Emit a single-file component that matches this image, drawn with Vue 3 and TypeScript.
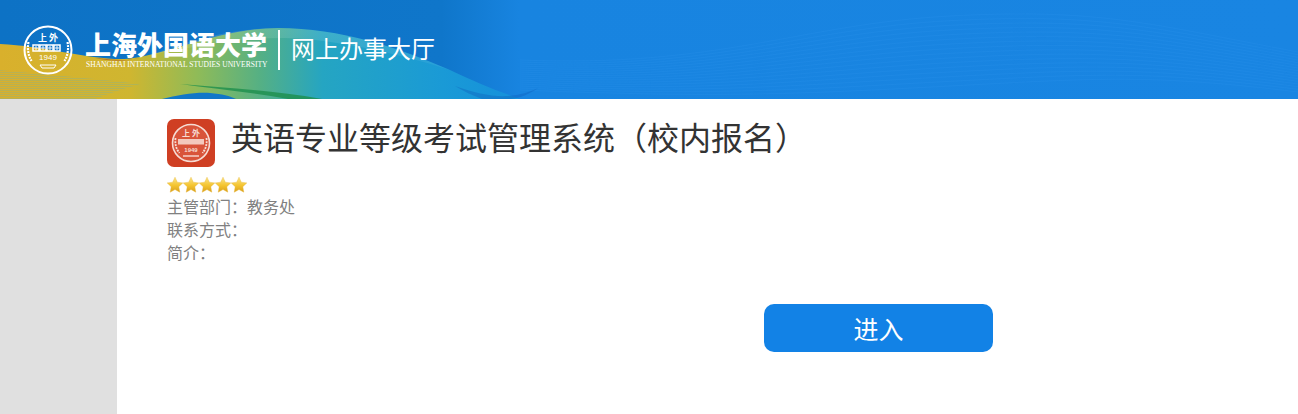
<script setup lang="ts">
const stars = [0, 1, 2, 3, 4];
const starPath = 'M8 .2l2.3 5 5.5.7-4 3.8 1 5.5L8 12.5l-4.8 2.7 1-5.5-4-3.8 5.5-.7z';

// Faint strands of the wave on the right side of the banner
const strands = Array.from({length: 16}, (_, i) => {
  const t = i / 15;
  const a = 90 - t * 30;
  const b = 86 - t * 70;
  const c = 74 - t * 50;
  const d = 92 - t * 40;
  return `M520 ${a}C720 ${a + 8} 800 ${b + 8} 950 ${b}S1150 ${c} 1298 ${d}`;
});
const seals = [13, 20, 27, 34];
</script>

<template>
  <div class="page">
    <header class="banner">
      <svg class="banner-bg" viewBox="0 0 1298 99" preserveAspectRatio="none" aria-hidden="true">
        <defs>
          <linearGradient id="sky" x1="0" x2="1298" y1="0" y2="0" gradientUnits="userSpaceOnUse">
            <stop offset="0" stop-color="#0d72c5" />
            <stop offset="0.34" stop-color="#0f76ca" />
            <stop offset="0.4" stop-color="#1884e0" />
            <stop offset="1" stop-color="#1985e2" />
          </linearGradient>
          <linearGradient id="ribbon" x1="0" x2="520" y1="0" y2="0" gradientUnits="userSpaceOnUse">
            <stop offset="0" stop-color="#d9b02c" />
            <stop offset="0.25" stop-color="#cfb630" />
            <stop offset="0.38" stop-color="#8fbb58" />
            <stop offset="0.5" stop-color="#55b084" />
            <stop offset="0.62" stop-color="#25a5c2" />
            <stop offset="0.85" stop-color="#1a9ad6" />
            <stop offset="1" stop-color="#1590dc" />
          </linearGradient>
          <linearGradient id="fadeTop" x1="0" x2="0" y1="30" y2="99" gradientUnits="userSpaceOnUse">
            <stop offset="0" stop-color="#fff" stop-opacity="0.12" />
            <stop offset="1" stop-color="#fff" stop-opacity="0" />
          </linearGradient>
          <pattern id="hatch" width="8" height="2" patternUnits="userSpaceOnUse">
            <rect width="8" height="1" fill="#6fb0b0" fill-opacity="0.3" />
          </pattern>
        </defs>
        <rect width="1298" height="99" fill="url(#sky)" />
        <path v-for="(d, i) in strands" :key="i" :d="d" fill="none" stroke="#3a9df0" stroke-opacity="0.16" />
        <path d="M0 44C45 46 90 60 125 59C165 56 220 28 278 28C340 28 400 48 450 70C475 82 495 90 520 99H0Z" fill="url(#ribbon)" />
        <path d="M150 55C195 38 240 28 278 28C340 28 400 48 450 70C420 60 340 38 280 38C230 38 190 48 150 55Z" fill="url(#fadeTop)" />
        <path d="M0 70C40 74 90 78 140 84C120 90 105 95 95 99H0Z" fill="url(#hatch)" />
        <path d="M95 58C110 59 125 62 140 58C128 61 112 62 95 58Z" fill="#b8762a" />
        <path d="M180 84C225 88 272 90 322 99H288C250 92 215 89 180 84Z" fill="#1d8f4c" fill-opacity="0.8" />
        <path d="M162 99C178 95 196 92 210 93C222 94 230 96 236 99Z" fill="#1177c8" />
        <path d="M455 86C475 93 492 97 508 96C520 95 530 92 538 88C530 94 520 98 510 99H482C472 95 463 91 455 86Z" fill="#0f58b8" fill-opacity="0.35" />
      </svg>
      <div class="brand">
        <svg class="emblem" viewBox="0 0 50 50" aria-hidden="true">
          <circle cx="25" cy="25" r="23.5" fill="none" stroke="#fff" stroke-width="2" />
          <text x="25" y="15.5" class="emblem-top">上 外</text>
          <g v-for="x in seals" :key="x">
            <rect :x="x - 3" y="20" width="6" height="6" fill="none" stroke="#fff" stroke-width="1.5" />
            <path :d="`M${x - 2} 23h4M${x} 21v4`" stroke="#fff" stroke-width="0.9" />
          </g>
          <text x="25" y="35" class="emblem-year">1949</text>
          <path d="M5.5 17q-2 10 3 19M44.5 17q2 10-3 19" fill="none" stroke="#fff" stroke-width="2.2" stroke-dasharray="2 1" />
          <path d="M17 40h16l-2 3H19z" fill="none" stroke="#fff" stroke-width="1" />
        </svg>
        <div class="school">
          <div class="school-cn">上海外国语大学</div>
          <div class="school-en">SHANGHAI INTERNATIONAL STUDIES UNIVERSITY</div>
        </div>
        <span class="divider"></span>
        <div class="hall">网上办事大厅</div>
      </div>
    </header>
    <div class="body">
      <aside class="side"></aside>
      <main class="main">
        <div class="title-row">
          <svg class="app-icon" viewBox="0 0 48 48" aria-hidden="true">
            <rect width="48" height="48" rx="7" fill="#cf3f23" />
            <circle cx="24" cy="24" r="18.5" fill="#d9543a" stroke="#f6dcd4" stroke-width="1.6" />
            <text x="24" y="16.5" class="icon-top">上 外</text>
            <rect x="11" y="20" width="26" height="5.5" fill="#f3c9bd" />
            <text x="24" y="33" class="icon-year">1949</text>
            <path d="M8.5 19q-1 9 4 15M39.5 19q1 9-4 15" fill="none" stroke="#f6dcd4" stroke-width="1.8" stroke-dasharray="2 1" />
            <path d="M16 37h16" stroke="#f6dcd4" stroke-width="1.4" />
          </svg>
          <h1 class="title">英语专业等级考试管理系统（校内报名）</h1>
        </div>
        <div class="stars">
          <svg v-for="s in stars" :key="s" viewBox="0 0 16 16" class="star" aria-hidden="true">
            <defs>
              <linearGradient :id="`star${s}`" x1="0" x2="0" y1="0" y2="1">
                <stop offset="0" stop-color="#fbe58a" />
                <stop offset="0.55" stop-color="#f4c430" />
                <stop offset="1" stop-color="#d99f1c" />
              </linearGradient>
            </defs>
            <path :d="starPath" :fill="`url(#star${s})`" stroke="#e8b93a" stroke-width="0.4" />
          </svg>
        </div>
        <div class="info">主管部门：教务处</div>
        <div class="info">联系方式：</div>
        <div class="info">简介：</div>
        <div class="actions">
          <button class="enter" type="button">进入</button>
        </div>
      </main>
    </div>
  </div>
</template>

<style scoped>
.page {
  width: 1298px;
  height: 414px;
  overflow: hidden;
  background: #fff;
  font-family: "Noto Sans CJK SC", "Liberation Sans", sans-serif;
}

.banner {
  position: relative;
  height: 99px;
}

.banner-bg {
  position: absolute;
  inset: 0;
  width: 100%;
  height: 100%;
}

.brand {
  position: relative;
  display: flex;
  align-items: center;
  height: 99px;
  padding-left: 23px;
  color: #fff;
}

.emblem {
  width: 50px;
  height: 50px;
  flex: none;
}

.emblem-top,
.emblem-year,
.icon-top,
.icon-year {
  text-anchor: middle;
}

.emblem-top {
  font-size: 9px;
  font-weight: 700;
  fill: #fff;
}

.emblem-year {
  font-family: "Liberation Sans", sans-serif;
  font-size: 8px;
  fill: #fff;
}

.icon-top {
  font-size: 8px;
  font-weight: 700;
  fill: #f6dcd4;
}

.icon-year {
  font-family: "Liberation Sans", sans-serif;
  font-size: 6px;
  font-weight: 700;
  fill: #f6dcd4;
}

.school {
  width: 183px;
  margin-left: 12px;
  margin-top: -1px;
}

.school-cn {
  font-size: 26px;
  line-height: 32px;
  font-weight: 900;
  white-space: nowrap;
}

.school-en {
  font-family: "Liberation Serif", serif;
  font-size: 7.55px;
  line-height: 10px;
  white-space: nowrap;
  padding-left: 1px;
}

.divider {
  width: 2px;
  height: 40px;
  margin-left: 10px;
  background: #fff;
}

.hall {
  margin-left: 11px;
  font-size: 24px;
  line-height: 34px;
  margin-top: -3px;
}

.body {
  display: flex;
  height: 315px;
}

.side {
  width: 117px;
  flex: none;
  background: #e0e0e0;
}

.main {
  flex: 1;
  padding: 20px 0 0 50px;
}

.title-row {
  display: flex;
  align-items: flex-start;
  gap: 16px;
}

.app-icon {
  width: 48px;
  height: 48px;
  flex: none;
}

.title {
  margin: 0;
  font-size: 32px;
  line-height: 34px;
  font-weight: 400;
  color: #333;
}

.stars {
  display: flex;
  height: 18px;
  margin-top: 10px;
}

.star {
  width: 16px;
  height: 16px;
  display: block;
}

.info {
  font-size: 16px;
  line-height: 23px;
  color: #808080;
}

.actions {
  margin-top: 40px;
  padding-left: 597px;
}

.enter {
  display: block;
  width: 229px;
  height: 48px;
  border: 0;
  border-radius: 10px;
  background: #1282e6;
  color: #fff;
  font-family: inherit;
  font-size: 25px;
}
</style>
